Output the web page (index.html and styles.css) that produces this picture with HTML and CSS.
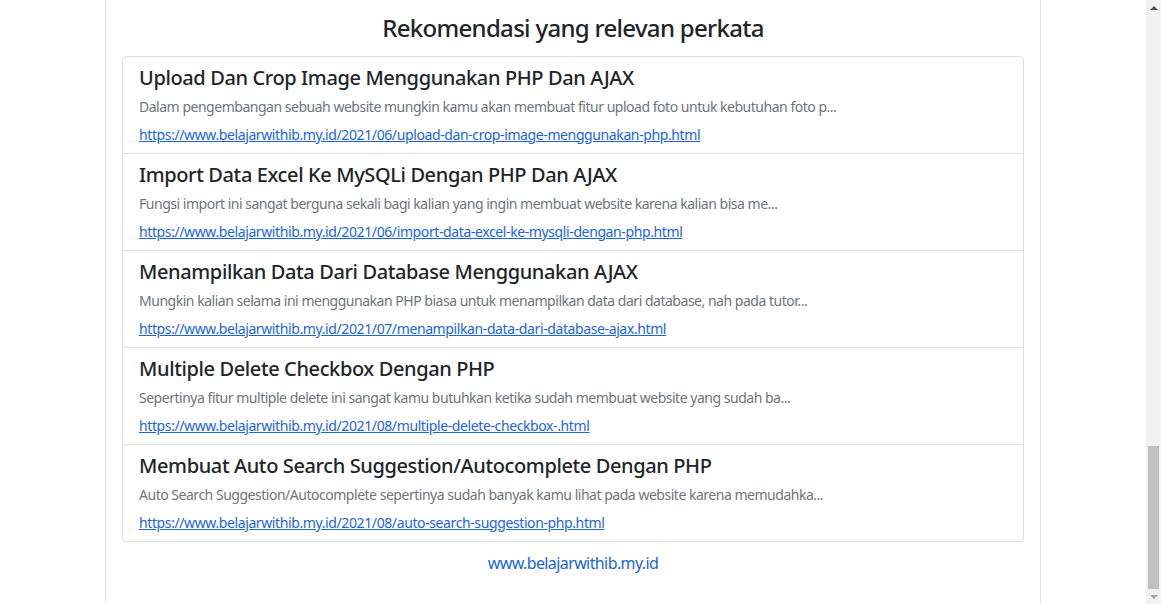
FILE: index.html
```html
<!DOCTYPE html>
<html lang="id">
<head>
    <meta charset="UTF-8">
    <meta name="viewport" content="width=device-width, initial-scale=1.0">
    <title>Rekomendasi yang relevan perkata</title>
    <link rel="stylesheet" href="styles.css">
</head>
<body>
    <div class="page">
        <div class="container">
            <h4 class="related-title">Rekomendasi yang relevan perkata</h4>

            <div class="list-group">
                <div class="list-group-item">
                    <h5>Upload Dan Crop Image Menggunakan PHP Dan AJAX</h5>
                    <p>Dalam pengembangan sebuah website mungkin kamu akan membuat fitur upload foto untuk kebutuhan foto p...</p>
                    <a href="#">https://www.belajarwithib.my.id/2021/06/upload-dan-crop-image-menggunakan-php.html</a>
                </div>
                <div class="list-group-item">
                    <h5>Import Data Excel Ke MySQLi Dengan PHP Dan AJAX</h5>
                    <p>Fungsi import ini sangat berguna sekali bagi kalian yang ingin membuat website karena kalian bisa me...</p>
                    <a href="#">https://www.belajarwithib.my.id/2021/06/import-data-excel-ke-mysqli-dengan-php.html</a>
                </div>
                <div class="list-group-item">
                    <h5>Menampilkan Data Dari Database Menggunakan AJAX</h5>
                    <p>Mungkin kalian selama ini menggunakan PHP biasa untuk menampilkan data dari database, nah pada tutor...</p>
                    <a href="#">https://www.belajarwithib.my.id/2021/07/menampilkan-data-dari-database-ajax.html</a>
                </div>
                <div class="list-group-item">
                    <h5>Multiple Delete Checkbox Dengan PHP</h5>
                    <p>Sepertinya fitur multiple delete ini sangat kamu butuhkan ketika sudah membuat website yang sudah ba...</p>
                    <a href="#">https://www.belajarwithib.my.id/2021/08/multiple-delete-checkbox-.html</a>
                </div>
                <div class="list-group-item">
                    <h5>Membuat Auto Search Suggestion/Autocomplete Dengan PHP</h5>
                    <p>Auto Search Suggestion/Autocomplete sepertinya sudah banyak kamu lihat pada website karena memudahka...</p>
                    <a href="#">https://www.belajarwithib.my.id/2021/08/auto-search-suggestion-php.html</a>
                </div>
            </div>

            <div class="site-link">www.belajarwithib.my.id</div>
        </div>
    </div>

    <!-- scrollbar (halaman sudah discroll ke bawah) -->
    <div class="scrollbar">
        <div class="scroll-btn"><span class="arrow-up"></span></div>
        <div class="scroll-track">
            <div class="scroll-thumb"></div>
        </div>
        <div class="scroll-btn"><span class="arrow-down"></span></div>
    </div>
</body>
</html>
```

FILE: styles.css
```css
* {
    margin: 0;
    padding: 0;
    box-sizing: border-box;
}

html, body {
    height: 100%;
    overflow: hidden;
}

body {
    display: flex;
    background-color: #fff;
    font-family: "Segoe UI", "Noto Sans", sans-serif;
    color: #212529;
}

.page {
    flex: 1;
    display: flex;
    justify-content: center;
}

.container {
    width: 936px;
    height: 100%;
    padding: 14px 16px 0;
    border-left: 1px solid #dee2e6;
    border-right: 1px solid #dee2e6;
}

.related-title {
    font-size: 24px;
    font-weight: 500;
    line-height: 1.2;
    letter-spacing: -0.7px;
    text-align: center;
    margin-bottom: 13px;
}

.list-group {
    border: 1px solid #dfdfdf;
    border-radius: 4px;
}

.list-group-item {
    padding: 9px 16px 8px;
    border-top: 1px solid #dfdfdf;
}

.list-group-item:first-child {
    border-top: none;
}

.list-group-item h5 {
    font-size: 20px;
    font-weight: 500;
    line-height: 1.2;
    letter-spacing: -0.38px;
    margin-bottom: 6px;
}

.list-group-item p {
    font-size: 14px;
    line-height: 21px;
    letter-spacing: -0.48px;
    color: #6c757d;
    margin-bottom: 7px;
}

.list-group-item a {
    display: block;
    font-size: 14px;
    line-height: 21px;
    letter-spacing: -0.39px;
    color: #1b64dc;
    text-decoration: underline;
}

.site-link {
    margin-top: 9px;
    text-align: center;
    font-size: 16px;
    line-height: 24px;
    letter-spacing: -0.6px;
    color: #1b64dc;
}

/* scrollbar */
.scrollbar {
    width: 15px;
    display: flex;
    flex-direction: column;
    background-color: #f1f1f1;
}

.scroll-btn {
    height: 15px;
    display: flex;
    align-items: center;
    justify-content: center;
}

.arrow-up {
    border-left: 4px solid transparent;
    border-right: 4px solid transparent;
    border-bottom: 4px solid #505050;
}

.arrow-down {
    border-left: 4px solid transparent;
    border-right: 4px solid transparent;
    border-top: 4px solid #a3a3a3;
}

.scroll-track {
    flex: 1;
    display: flex;
    flex-direction: column;
    justify-content: flex-end;
    padding: 0 2px;
}

.scroll-thumb {
    height: 143px;
    background-color: #c1c1c1;
}
```
